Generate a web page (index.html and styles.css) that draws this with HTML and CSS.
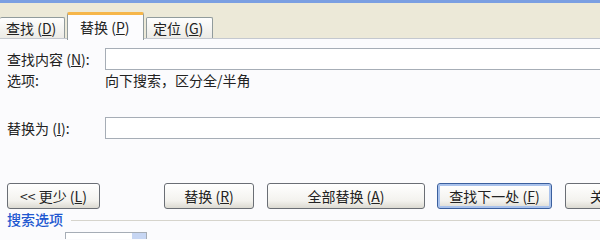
FILE: index.html
```html
<!DOCTYPE html>
<html lang="zh-CN">
<head>
    <title>查找和替换</title>
    <link rel="stylesheet" href="styles.css">
</head>
<body>
    <div class="titlebar"></div>
    <div class="tabbar">
        <div class="tab tab-find">查找 (<u>D</u>)</div>
        <div class="tab tab-active">替换 (<u>P</u>)</div>
        <div class="tab tab-goto">定位 (<u>G</u>)</div>
    </div>
    <div class="panel">
        <div class="row row-find">
            <span class="label">查找内容 (<u>N</u>):</span>
            <div class="field"></div>
        </div>
        <div class="row row-opts">
            <span class="label">选项:</span>
            <span class="opts">向下搜索，区分全/半角</span>
        </div>
        <div class="row row-replace">
            <span class="label">替换为 (<u>I</u>):</span>
            <div class="field"></div>
        </div>
        <div class="buttons">
            <button class="btn btn-less">&lt;&lt; 更少 (<u>L</u>)</button>
            <button class="btn btn-replace">替换 (<u>R</u>)</button>
            <button class="btn btn-all">全部替换 (<u>A</u>)</button>
            <button class="btn btn-next focused">查找下一处 (<u>F</u>)</button>
            <button class="btn btn-close">关闭</button>
        </div>
        <div class="section">
            <span class="section-title">搜索选项</span>
            <div class="section-line"></div>
        </div>
        <div class="select-row">
            <div class="select"></div>
        </div>
    </div>
</body>
</html>
```
FILE: styles.css
```css
body {
    margin: 0;
    width: 600px;
    height: 240px;
    overflow: hidden;
    background-color: #fbfbfd;
    font-family: "Noto Sans CJK SC", "Liberation Sans", sans-serif;
    font-size: 14px;
    color: #222;
}
u {
    text-decoration: underline;
}
.titlebar {
    height: 3px;
    background-color: #7b9fe2;
}
.tabbar {
    height: 35px;
    background-color: #ece9d8;
    display: flex;
    align-items: flex-end;
    gap: 2px;
    border-bottom: 1px solid #c4c8cf;
}
.tab {
    height: 20px;
    line-height: 20px;
    padding: 0 6px;
    background: linear-gradient(#fefefe, #ecebe6);
    border: 1px solid #919b9c;
    border-bottom: none;
    border-radius: 2px 2px 0 0;
    white-space: nowrap;
}
.tab-find {
    width: 52px;
    border-left: none;
}
.tab-goto {
    width: 53px;
}
.tab-active {
    width: 57px;
    height: 25px;
    line-height: 24px;
    margin-bottom: -2px;
    padding-left: 12px;
    background: #fcfcfe;
    border-top: 3px solid #f6b64a;
}
.panel {
    padding: 9px 0 0 7px;
}
.row {
    display: flex;
    align-items: center;
}
.label {
    width: 98px;
    flex-shrink: 0;
    white-space: nowrap;
}
.row-find {
    height: 22px;
}
.row-opts {
    height: 20px;
}
.row-replace {
    height: 22px;
    margin-top: 27px;
}
.field {
    width: 520px;
    height: 20px;
    flex-shrink: 0;
    background-color: #fff;
    border: 1px solid #a6adb6;
}
.buttons {
    display: flex;
    margin-top: 44px;
}
.btn {
    height: 26px;
    padding: 0;
    font-family: inherit;
    font-size: 14px;
    color: #222;
    white-space: nowrap;
    background: linear-gradient(#ffffff, #f3f2ee 70%, #dcdad2);
    border: 1px solid #6a6e75;
    border-radius: 3px;
    flex-shrink: 0;
}
.btn-less {
    width: 93px;
}
.btn-replace {
    width: 90px;
    margin-left: 64px;
}
.btn-all {
    width: 158px;
    margin-left: 13px;
}
.btn-next {
    width: 115px;
    margin-left: 12px;
}
.btn-close {
    width: 80px;
    margin-left: 13px;
    text-align: left;
    padding-left: 24px;
}
.focused {
    border-color: #3a5f9e;
    box-shadow: inset 0 0 0 2px #a9c2ec;
}
.section {
    display: flex;
    align-items: center;
    margin-top: 2px;
    height: 16px;
}
.section-title {
    color: #2157d0;
    font-weight: 500;
}
.section-line {
    flex: 1;
    height: 1px;
    margin-left: 8px;
    margin-top: 3px;
    background-color: #d6d4cc;
}
.select-row {
    padding-left: 58px;
    margin-top: 5px;
}
.select {
    width: 80px;
    height: 6px;
    background: linear-gradient(to right, #fff 82%, #c7d6f3 82%);
    border: 1px solid #a6adb6;
    border-bottom: none;
}
```
